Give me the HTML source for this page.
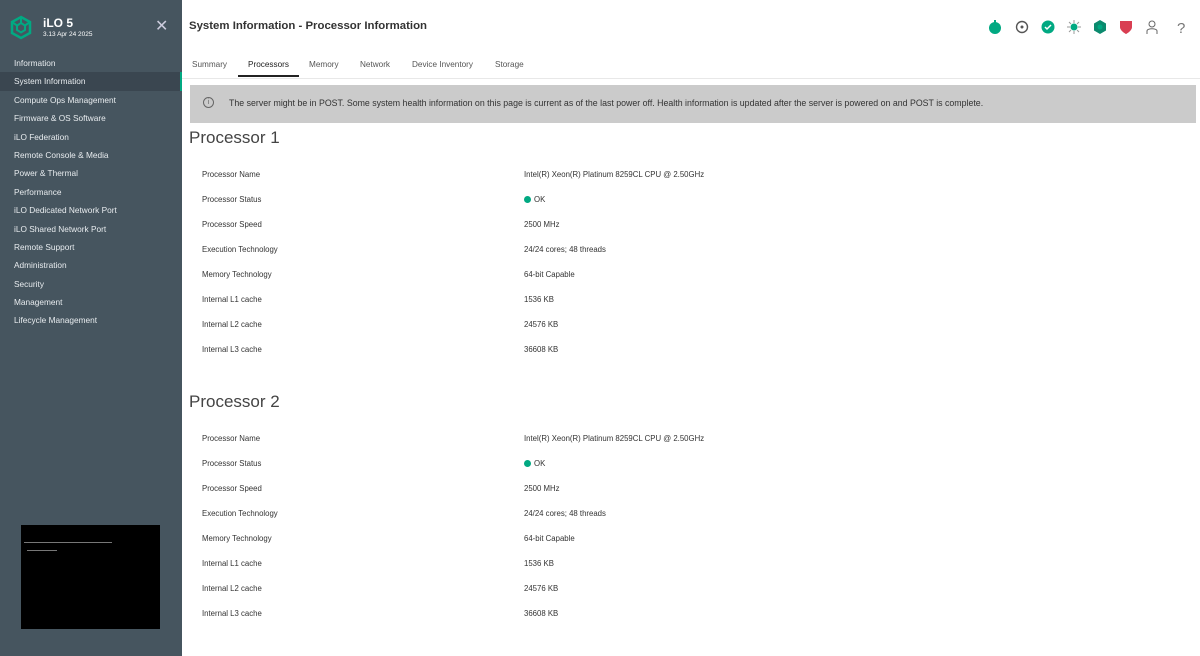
<!DOCTYPE html><html><head><style>
body{margin:0;width:1200px;height:656px;overflow:hidden;font-family:"Liberation Sans",sans-serif;background:#fff;position:relative}
#sb{position:absolute;left:0;top:0;width:182px;height:656px;background:#46555f;color:#e8ecef}
#sb .nav div{height:18.4px;line-height:18.4px;padding-left:14px;font-size:8.3px}
#sb .nav .act{background:#3a4650;border-right:2px solid #01a982}
#main{position:absolute;left:182px;top:0;right:0;height:656px}
.tabs span{position:absolute;top:60px;font-size:8.2px;color:#555}
.row{position:absolute;font-size:7.8px;color:#333}
</style></head><body>
<div id="sb">
<svg style="position:absolute;left:9px;top:15px" width="24" height="26" viewBox="0 0 24 26"><path d="M12 2L21 7V18L12 23L3 18V7Z" fill="none" stroke="#01a982" stroke-width="2.5"/><path d="M12 8L16 10.5V15L12 17.5L8 15V10.5Z" fill="none" stroke="#01a982" stroke-width="2"/><path d="M12 2V8M21 7L16 10.5M3 7L8 10.5" stroke="#01a982" stroke-width="2"/></svg>
<div style="position:absolute;left:43px;top:16px;font-size:12px;font-weight:bold;color:#fff">iLO 5</div>
<div style="position:absolute;left:43px;top:31px;font-size:6.5px;color:#fff">3.13 Apr 24 2025</div>
<div style="position:absolute;left:155px;top:16px;font-size:16px;color:#ccd">✕</div>
<div class="nav" style="position:absolute;top:54px;left:0;right:0">
<div>Information</div><div class="act">System Information</div><div>Compute Ops Management</div><div>Firmware &amp; OS Software</div><div>iLO Federation</div><div>Remote Console &amp; Media</div><div>Power &amp; Thermal</div><div>Performance</div><div>iLO Dedicated Network Port</div><div>iLO Shared Network Port</div><div>Remote Support</div><div>Administration</div><div>Security</div><div>Management</div><div>Lifecycle Management</div></div>
<div style="position:absolute;left:21px;top:525px;width:139px;height:104px;background:#000"><div style="position:absolute;left:3px;top:17px;width:88px;height:1px;background:#777"></div><div style="position:absolute;left:6px;top:25px;width:30px;height:1px;background:#777"></div></div>
</div>
<div id="main">
<div style="position:absolute;left:7px;top:20px;font-size:11.4px;font-weight:bold;color:#333">System Information - Processor Information</div>
<svg style="position:absolute;left:800px;top:18px" width="215" height="18">
<circle cx="13" cy="10" r="6" fill="#01a982"/><rect x="12" y="2" width="2" height="3" fill="#01a982"/>
<circle cx="40" cy="9" r="5.5" fill="none" stroke="#555" stroke-width="1.4"/><circle cx="40" cy="9" r="1.5" fill="#555"/>
<circle cx="66" cy="9" r="6.5" fill="#01a982"/><path d="M63 9l2 2 4-4" stroke="#fff" stroke-width="1.5" fill="none"/>
<circle cx="92" cy="9" r="3.5" fill="#01a982"/><path d="M92 2v3M92 13v3M85 9h3M96 9h3M87 4l2 2M95 12l2 2M87 14l2-2M95 6l2-2" stroke="#999"/>
<path d="M118 2l6 3.5v7L118 16l-6-3.5v-7z" fill="#0b8a6e"/><circle cx="118" cy="9" r="2.5" fill="#01a982"/>
<path d="M138 3h12v6c0 4-6 7-6 7s-6-3-6-7z" fill="#d93e52"/>
<circle cx="170" cy="6" r="3" fill="none" stroke="#666"/><path d="M165 16v-3c0-3 10-3 10 0v3" fill="none" stroke="#666"/>
<text x="195" y="15" font-size="15" fill="#777" font-family="Liberation Sans">?</text></svg>
<div class="tabs"><span style="left:10px">Summary</span><span style="left:66px;color:#222">Processors</span><span style="left:127px">Memory</span><span style="left:178px">Network</span><span style="left:230px">Device Inventory</span><span style="left:313px">Storage</span></div>
<div style="position:absolute;left:56px;top:75px;width:61px;height:2px;background:#222"></div>
<div style="position:absolute;left:0;right:0;top:78px;height:1px;background:#e8e8e8"></div>
<div style="position:absolute;left:8px;top:85px;width:1006px;height:38px;background:#cbcbcb"></div>
<div style="position:absolute;left:21px;top:97px;width:9px;height:9px;border:1px solid #666;border-radius:50%;font-size:7px;text-align:center;line-height:9px;color:#666">i</div>
<div style="position:absolute;left:47px;top:98px;font-size:8.8px;color:#333;white-space:nowrap">The server might be in POST. Some system health information on this page is current as of the last power off. Health information is updated after the server is powered on and POST is complete.</div>
<div style="position:absolute;left:7px;top:128px;font-size:17px;color:#444">Processor 1</div>
<div style="position:absolute;left:7px;top:392px;font-size:17px;color:#444">Processor 2</div>
<div id="r1"></div>
</div>
<script>
var L=["Processor Name","Processor Status","Processor Speed","Execution Technology","Memory Technology","Internal L1 cache","Internal L2 cache","Internal L3 cache"];
var V=["Intel(R) Xeon(R) Platinum 8259CL CPU @ 2.50GHz","OK","2500 MHz","24/24 cores; 48 threads","64-bit Capable","1536 KB","24576 KB","36608 KB"];
var h="";[170,434].forEach(function(t){L.forEach(function(l,i){var y=t+i*25;h+='<div class="row" style="left:20px;top:'+y+'px">'+l+'</div><div class="row" style="left:342px;top:'+y+'px">'+(i==1?'<span style="display:inline-block;width:7px;height:7px;border-radius:50%;background:#01a982;vertical-align:-1px;margin-right:3px"></span>':'')+V[i]+'</div>';});});
document.getElementById("r1").outerHTML=h;
</script>
</body></html>
